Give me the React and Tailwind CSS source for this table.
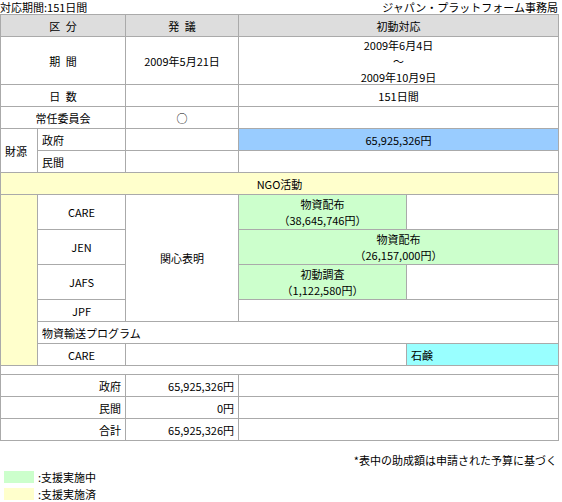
import React from 'react';

// one cell of the grid: position classes come in full from the caller
const Cell = ({ className = '', children }) => (
  <div className={`flex items-center ${className}`}>{children}</div>
);

const center = 'justify-center text-center';
const left = 'justify-start pl-1';
const right = 'justify-end pr-1';

export default function App() {
  return (
    <div className="w-[562px] h-[502px] bg-white text-[11px] leading-[14px] text-black font-['Noto_Sans_CJK_JP',sans-serif]">
      {/* Title line */}
      <div className="flex justify-between items-center h-[14px] w-[559px]">
        <span>対応期間:151日間</span>
        <span className="pr-px">ジャパン・プラットフォーム事務局</span>
      </div>

      {/* Table */}
      <div className="grid w-[559px] grid-cols-[36px_87px_112px_167px_151px] grid-rows-[21px_47px_21px_21px_21px_21px_21px_34px_34px_34px_21px_21px_21px_8px_21px_21px_21px] gap-px p-px bg-[#aaaaaa]">
        {/* header */}
        <Cell className={`col-start-1 col-span-2 row-start-1 bg-[#dddddd] ${center}`}>区&ensp;分</Cell>
        <Cell className={`col-start-3 row-start-1 bg-[#dddddd] ${center}`}>発&ensp;議</Cell>
        <Cell className={`col-start-4 col-span-2 row-start-1 bg-[#dddddd] ${center}`}>初動対応</Cell>

        {/* 期間 */}
        <Cell className={`col-start-1 col-span-2 row-start-2 bg-white ${center}`}>期&ensp;間</Cell>
        <Cell className={`col-start-3 row-start-2 bg-white ${center}`}>2009年5月21日</Cell>
        <Cell className={`col-start-4 col-span-2 row-start-2 bg-white flex-col leading-[16px] ${center}`}>
          <span>2009年6月4日</span>
          <span>～</span>
          <span>2009年10月9日</span>
        </Cell>

        {/* 日数 */}
        <Cell className={`col-start-1 col-span-2 row-start-3 bg-white ${center}`}>日&ensp;数</Cell>
        <Cell className="col-start-3 row-start-3 bg-white" />
        <Cell className={`col-start-4 col-span-2 row-start-3 bg-white ${center}`}>151日間</Cell>

        {/* 常任委員会 */}
        <Cell className={`col-start-1 col-span-2 row-start-4 bg-white ${center}`}>常任委員会</Cell>
        <Cell className={`col-start-3 row-start-4 bg-white ${center}`}>○</Cell>
        <Cell className="col-start-4 col-span-2 row-start-4 bg-white" />

        {/* 財源 */}
        <Cell className={`col-start-1 row-start-5 row-span-2 bg-white ${left}`}>財源</Cell>
        <Cell className={`col-start-2 row-start-5 bg-white ${left}`}>政府</Cell>
        <Cell className="col-start-3 row-start-5 bg-white" />
        <Cell className={`col-start-4 col-span-2 row-start-5 bg-[#99ccff] ${center}`}>65,925,326円</Cell>
        <Cell className={`col-start-2 row-start-6 bg-white ${left}`}>民間</Cell>
        <Cell className="col-start-3 row-start-6 bg-white" />
        <Cell className="col-start-4 col-span-2 row-start-6 bg-white" />

        {/* NGO活動 */}
        <Cell className={`col-start-1 col-span-5 row-start-7 bg-[#ffffcc] ${center}`}>NGO活動</Cell>
        <Cell className="col-start-1 row-start-8 row-span-6 bg-[#ffffcc]" />

        <Cell className={`col-start-2 row-start-8 bg-white ${center}`}>CARE</Cell>
        <Cell className={`col-start-3 row-start-8 row-span-4 bg-white ${center}`}>関心表明</Cell>
        <Cell className={`col-start-4 row-start-8 bg-[#ccffcc] flex-col leading-[16px] ${center}`}>
          <span>物資配布</span>
          <span>（38,645,746円）</span>
        </Cell>
        <Cell className="col-start-5 row-start-8 bg-white" />

        <Cell className={`col-start-2 row-start-9 bg-white ${center}`}>JEN</Cell>
        <Cell className={`col-start-4 col-span-2 row-start-9 bg-[#ccffcc] flex-col leading-[16px] ${center}`}>
          <span>物資配布</span>
          <span>（26,157,000円）</span>
        </Cell>

        <Cell className={`col-start-2 row-start-10 bg-white ${center}`}>JAFS</Cell>
        <Cell className={`col-start-4 row-start-10 bg-[#ccffcc] flex-col leading-[16px] ${center}`}>
          <span>初動調査</span>
          <span>（1,122,580円）</span>
        </Cell>
        <Cell className="col-start-5 row-start-10 bg-white" />

        <Cell className={`col-start-2 row-start-11 bg-white ${center}`}>JPF</Cell>
        <Cell className="col-start-4 col-span-2 row-start-11 bg-white" />

        <Cell className={`col-start-2 col-span-4 row-start-12 bg-white ${left}`}>物資輸送プログラム</Cell>

        <Cell className={`col-start-2 row-start-13 bg-white ${center}`}>CARE</Cell>
        <Cell className="col-start-3 col-span-2 row-start-13 bg-white" />
        <Cell className={`col-start-5 row-start-13 bg-[#99ffff] ${left}`}>石鹸</Cell>

        {/* spacer */}
        <Cell className="col-start-1 col-span-5 row-start-14 bg-white" />

        {/* totals */}
        <Cell className={`col-start-1 col-span-2 row-start-15 bg-white ${right}`}>政府</Cell>
        <Cell className={`col-start-3 row-start-15 bg-white ${right}`}>65,925,326円</Cell>
        <Cell className="col-start-4 col-span-2 row-start-15 bg-white" />

        <Cell className={`col-start-1 col-span-2 row-start-16 bg-white ${right}`}>民間</Cell>
        <Cell className={`col-start-3 row-start-16 bg-white ${right}`}>0円</Cell>
        <Cell className="col-start-4 col-span-2 row-start-16 bg-white" />

        <Cell className={`col-start-1 col-span-2 row-start-17 bg-white ${right}`}>合計</Cell>
        <Cell className={`col-start-3 row-start-17 bg-white ${right}`}>65,925,326円</Cell>
        <Cell className="col-start-4 col-span-2 row-start-17 bg-white" />
      </div>

      {/* Note */}
      <div className="mt-[12px] w-[559px] text-right pr-[2px]">*表中の助成額は申請された予算に基づく</div>

      {/* Legend */}
      <div className="mt-px flex flex-col">
        <div className="flex items-center h-[17px]">
          <span className="ml-1 w-[30px] h-3 bg-[#ccffcc]" />
          <span className="ml-1">:支援実施中</span>
        </div>
        <div className="flex items-center h-[17px]">
          <span className="ml-1 w-[30px] h-3 bg-[#ffffcc]" />
          <span className="ml-1">:支援実施済</span>
        </div>
      </div>
    </div>
  );
}
